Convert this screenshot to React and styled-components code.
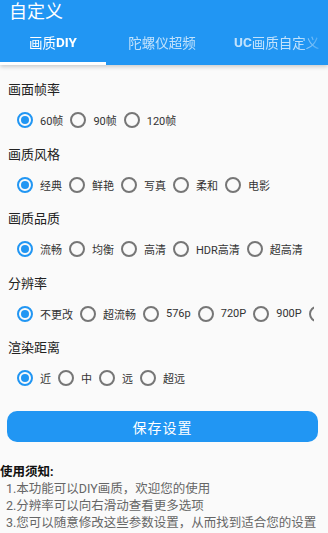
import React, { useState } from "react";
import styled, { createGlobalStyle } from "styled-components";

const Global = createGlobalStyle`
  html, body { margin: 0; padding: 0; background: #fafafa; }
  body { font-family: Roboto, "Noto Sans CJK SC", "Noto Sans", sans-serif; width: 328px; height: 533px; overflow: hidden; }
  * { box-sizing: border-box; }
`;

const BLUE = "#2196f3";

const Page = styled.div`
  width: 328px;
  height: 533px;
  overflow: hidden;
  background: #fafafa;
`;

const Header = styled.header`
  background: ${BLUE};
  height: 65px;
  display: flex;
  flex-direction: column;
  position: relative;
  box-shadow: 0 2px 4px rgba(0, 0, 0, 0.18);
`;

const Title = styled.h1`
  margin: 0;
  height: 26px;
  padding-left: 9px;
  font-size: 18px;
  line-height: 24px;
  font-weight: 400;
  color: #fff;
`;

const TabStrip = styled.div`
  flex: 1;
  display: flex;
  overflow: hidden;
  -webkit-mask-image: linear-gradient(to right, #000 300px, transparent 326px);
  mask-image: linear-gradient(to right, #000 300px, transparent 326px);
`;

const Tab = styled.div`
  flex: none;
  width: ${(p) => (p.$w ? `${p.$w}px` : "auto")};
  padding: 0 ${(p) => p.$pad || 0}px;
  display: flex;
  align-items: center;
  justify-content: ${(p) => (p.$w ? "center" : "flex-start")};
  padding-bottom: 5px;
  font-size: 13.5px;
  white-space: nowrap;
  color: ${(p) => (p.$active ? "#fff" : "rgba(255,255,255,0.72)")};
  border-bottom: 3px solid ${(p) => (p.$active ? "#fff" : "transparent")};
`;

const Latin = styled.span`
  font-weight: 700;
`;

const Content = styled.main`
  padding: 15px 14px 0 8px;
`;

const Section = styled.section`
  margin-bottom: 10.5px;
`;

const SectionTitle = styled.div`
  height: 20px;
  line-height: 20px;
  font-size: 13px;
  color: #222;
`;

const RadioRow = styled.div`
  margin-top: 6px;
  height: 28px;
  display: flex;
  align-items: center;
  padding-left: 9px;
  overflow: hidden;
`;

const RadioItem = styled.label`
  flex: none;
  display: flex;
  align-items: center;
  margin-right: 7px;
  cursor: pointer;
`;

const Circle = styled.span`
  flex: none;
  width: 16px;
  height: 16px;
  border-radius: 50%;
  border: 2px solid ${(p) => (p.$on ? BLUE : "#767676")};
  display: flex;
  align-items: center;
  justify-content: center;
  margin-right: 7px;
  &::after {
    content: "";
    width: 8px;
    height: 8px;
    border-radius: 50%;
    background: ${BLUE};
    display: ${(p) => (p.$on ? "block" : "none")};
  }
`;

const RadioLabel = styled.span`
  font-size: 11px;
  color: #333;
  white-space: nowrap;
`;

const SaveButton = styled.button`
  display: block;
  width: 311px;
  height: 31px;
  margin: 19px 0 0 -1px;
  border: none;
  border-radius: 10px;
  background: ${BLUE};
  color: #fff;
  font-family: inherit;
  font-size: 14px;
  letter-spacing: 1px;
`;

const Notice = styled.div`
  margin: 21px 0 0 -8px;
`;

const NoticeTitle = styled.div`
  font-size: 12.5px;
  font-weight: 700;
  color: #111;
  line-height: 17px;
`;

const NoticeLine = styled.div`
  padding-left: 6px;
  font-size: 12.5px;
  line-height: 17px;
  color: #666;
  white-space: nowrap;
`;

const sections = [
  { title: "画面帧率", options: ["60帧", "90帧", "120帧"] },
  { title: "画质风格", options: ["经典", "鲜艳", "写真", "柔和", "电影"] },
  { title: "画质品质", options: ["流畅", "均衡", "高清", "HDR高清", "超高清"] },
  { title: "分辨率", options: ["不更改", "超流畅", "576p", "720P", "900P", "1080P", "2K"] },
  { title: "渲染距离", options: ["近", "中", "远", "超远"] },
];

function RadioGroup({ options, value, onChange }) {
  return (
    <RadioRow>
      {options.map((o, i) => (
        <RadioItem key={o} onClick={() => onChange(i)}>
          <Circle $on={value === i} />
          <RadioLabel>{o}</RadioLabel>
        </RadioItem>
      ))}
    </RadioRow>
  );
}

export default function App() {
  const [vals, setVals] = useState(sections.map(() => 0));
  return (
    <Page>
      <Global />
      <Header>
        <Title>自定义</Title>
        <TabStrip>
          <Tab $active $w={106}>
            画质<Latin>DIY</Latin>
          </Tab>
          <Tab $w={112}>陀螺仪超频</Tab>
          <Tab $pad={16}>
            <Latin>UC</Latin>画质自定义
          </Tab>
        </TabStrip>
      </Header>
      <Content>
        {sections.map((s, si) => (
          <Section key={s.title}>
            <SectionTitle>{s.title}</SectionTitle>
            <RadioGroup
              options={s.options}
              value={vals[si]}
              onChange={(i) => setVals((v) => v.map((x, k) => (k === si ? i : x)))}
            />
          </Section>
        ))}
        <SaveButton>保存设置</SaveButton>
        <Notice>
          <NoticeTitle>使用须知:</NoticeTitle>
          <NoticeLine>1.本功能可以DIY画质，欢迎您的使用</NoticeLine>
          <NoticeLine>2.分辨率可以向右滑动查看更多选项</NoticeLine>
          <NoticeLine>3.您可以随意修改这些参数设置，从而找到适合您的设置</NoticeLine>
        </Notice>
      </Content>
    </Page>
  );
}
